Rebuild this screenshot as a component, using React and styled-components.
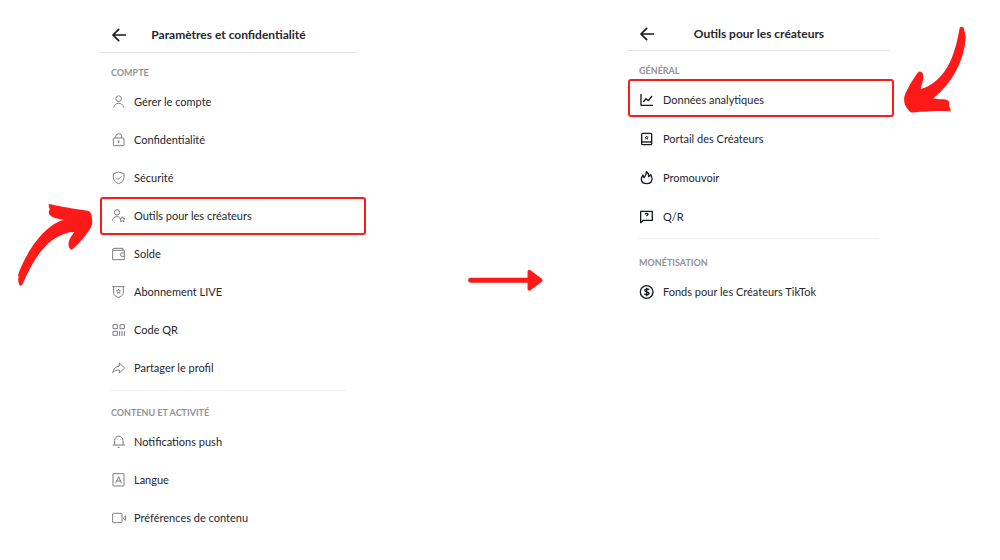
import React from 'react';
import styled, { createGlobalStyle } from 'styled-components';

const RED = '#ff1a1a';

const STAR = 'M0-8l2.4 5.2 5.6.6-4.2 3.8 1.2 5.6L0 4.4l-5 2.8 1.2-5.6L-8-2.2l5.6-.6z';

const icons = {
  person: (
    <>
      <circle cx="23" cy="11" r="8.5" />
      <path d="M8 37C11 28 16 25 23 25s12 3 15 12" />
    </>
  ),
  lock: (
    <>
      <rect x="7" y="15" width="32" height="23" rx="3" />
      <path d="M14 15v-4a9 9 0 0 1 18 0v4M23 24v7M20 24h6" />
    </>
  ),
  shield: (
    <>
      <path d="M23 3l16 5v12c0 9-7 15-16 18C14 35 7 29 7 20V8z" />
      <path d="M15 20l6 6 10-10" />
    </>
  ),
  creator: (
    <>
      <circle cx="18" cy="10" r="8" />
      <path d="M4 35C5 27 11 23 18 23c3 0 6 1 8 2" />
      <path d={STAR} transform="translate(34 31)" />
    </>
  ),
  wallet: (
    <>
      <path d="M36 10V4H8a3 3 0 0 0-3 3v31h35V10H6" />
      <path d="M40 18h-7a5 5 0 0 0 0 10h7" />
    </>
  ),
  badge: (
    <>
      <path d="M3 5h38M8 5v20c0 6 7 9 14 13 7-4 15-7 15-13V5" />
      <path d={STAR} transform="translate(22.500 19) scale(.8)" />
    </>
  ),
  qr: (
    <>
      <rect x="6" y="5" width="13" height="12" />
      <rect x="27" y="5" width="13" height="12" />
      <rect x="6" y="25" width="13" height="12" />
      <path d="M26 24v15M33 24v15M40 24v15" />
    </>
  ),
  share: <path d="M25 6l16 15-16 15v-9c-9 0-15 2-20 8 2-11 9-19 20-20z" />,
  bell: (
    <>
      <path d="M11 30V16a12 12 0 0 1 25 0v14M5 30h37" />
      <path d="M20 37h6" />
    </>
  ),
  language: (
    <>
      <rect x="6" y="2" width="33" height="37" rx="1" />
      <path d="M14 30l9-19 8 19M17 24h12" />
    </>
  ),
  camera: (
    <>
      <rect x="5" y="7" width="28" height="28" rx="2" />
      <path d="M44 15v13l-6-5v-3z" />
    </>
  ),
  chart: <path d="M6 3v34h36M13 27l8-10 7 6L39 9" />,
  book: (
    <>
      <rect x="8" y="4" width="30" height="34" rx="3" />
      <path d="M8 30h30" />
      <path d={STAR} transform="translate(23 17) scale(.6)" />
    </>
  ),
  flame: (
    <path d="M22 2c6 4 8 9 7 15l6-6c3 6 5 10 4 14-1 8-8 13-16 13S8 33 7 26c-1-5 2-9 5-14l3 8c5-5 7-11 7-18z" />
  ),
  question: (
    <>
      <path d="M5 38V4h35v27H13z" />
      <path d="M18 13c1-4 9-4 9 0 0 3-4 3-4 6M23 24v1" />
    </>
  ),
  dollar: (
    <>
      <circle cx="23" cy="21" r="19" />
      <path d="M30 15c-2-4-13-4-13 1 0 6 13 3 13 9 0 6-12 5-14 1M23 8v26" />
    </>
  ),
};

const account = [
  { icon: 'person', text: 'Gérer le compte' },
  { icon: 'lock', text: 'Confidentialité' },
  { icon: 'shield', text: 'Sécurité' },
  { icon: 'creator', text: 'Outils pour les créateurs', selected: true },
  { icon: 'wallet', text: 'Solde' },
  { icon: 'badge', text: 'Abonnement LIVE' },
  { icon: 'qr', text: 'Code QR' },
  { icon: 'share', text: 'Partager le profil' },
];

const content = [
  { icon: 'bell', text: 'Notifications push' },
  { icon: 'language', text: 'Langue' },
  { icon: 'camera', text: 'Préférences de contenu' },
];

const general = [
  { icon: 'chart', text: 'Données analytiques', selected: true },
  { icon: 'book', text: 'Portail des Créateurs' },
  { icon: 'flame', text: 'Promouvoir' },
  { icon: 'question', text: 'Q/R' },
];

const money = [
  { icon: 'dollar', text: 'Fonds pour les Créateurs TikTok' },
];

function PanelHeader({ title, tools }) {
  return (
    <Header $tools={tools}>
      <BackButton type="button" aria-label="Retour">
        <BackIcon viewBox="0 0 42 42">
          <path d="M40 21H4M20 4L3 21l17 17" />
        </BackIcon>
      </BackButton>
      <Title>{title}</Title>
    </Header>
  );
}

function Menu({ label, items, tools }) {
  return (
    <Section>
      <Label>{label}</Label>
      <List $tools={tools}>
        {items.map(item => (
          <li key={item.icon}>
            <Row type="button" $selected={item.selected} $tools={tools}>
              <Icon viewBox="0 0 42 42" $dark={tools} aria-hidden="true">
                {icons[item.icon]}
              </Icon>
              {item.text}
            </Row>
          </li>
        ))}
      </List>
    </Section>
  );
}

export default function App() {
  return (
    <>
      <GlobalStyle />
      <Page>
        <LeftArrow viewBox="26 38 224 250" aria-hidden="true">
          <path d="M118 41C150 47 195 57 234 61Q244 62 246 76Q250 100 245 108C235 128 210 158 190 175Q184 181 179 172C174 160 177 145 194 125C165 124 130 145 110 165C80 195 60 235 40 280Q36 288 30 283Q25 270 27 262Q29 258 26 254C45 195 100 105 163 88C145 86 125 82 119 71Q116 66 121 57Q117 50 118 41z" />
        </LeftArrow>
        <Panel>
          <PanelHeader title="Paramètres et confidentialité" />
          <Menu label="COMPTE" items={account} />
          <Divider />
          <Menu label="CONTENU ET ACTIVITÉ" items={content} />
        </Panel>
        <MiddleArrow viewBox="24 28 226 68" aria-hidden="true">
          <path d="M32 62h175" strokeWidth="15" />
          <path d="M209 36v52l34-26z" strokeWidth="11" />
        </MiddleArrow>
        <Panel>
          <PanelHeader title="Outils pour les créateurs" tools />
          <Menu label="GÉNÉRAL" items={general} tools />
          <Divider $tools />
          <Menu label="MONÉTISATION" items={money} tools />
        </Panel>
        <RightArrow viewBox="42 34 187 264" aria-hidden="true">
          <path d="M210 39Q215 33 222 39Q226 55 228 66C225 130 195 200 130 253C145 256 160 254 173 257Q181 262 178 271Q176 275 181 281L183 291C145 290 105 292 70 295Q60 296 54 285C43 274 41 262 43 247C52 220 70 195 83 175Q91 167 99 177C103 190 97 205 92 224C120 218 148 195 165 170C190 135 202 85 210 39z" />
        </RightArrow>
      </Page>
    </>
  );
}

const GlobalStyle = createGlobalStyle`
  * {
    box-sizing: border-box;
  }
  body {
    margin: 0;
    background: #fff;
    color: #26262e;
    font-family: Lato, "Liberation Sans", sans-serif;
  }
  button {
    font-family: inherit;
    color: inherit;
    background: none;
    border: 0;
    padding: 0;
    cursor: pointer;
  }
`;

const Page = styled.main`
  display: grid;
  grid-template-columns: 100fr 266fr 262fr 266fr 106fr;
  align-items: start;
  padding-bottom: 23px;
`;

const Panel = styled.section`
  min-width: 0;
`;

const Header = styled.header`
  display: grid;
  grid-template-columns: 16px 1fr 16px;
  align-items: center;
  height: ${props => (props.$tools ? '51px' : '53px')};
  padding: 18px 11px 0;
  margin-right: ${props => (props.$tools ? '4px' : '9px')};
  border-bottom: 1px solid #e3e3e4;
`;

const BackButton = styled.button`
  display: flex;
  justify-content: center;
`;

const BackIcon = styled.svg`
  width: 14px;
  height: 14px;
  fill: none;
  stroke: #161823;
  stroke-width: 5;
  stroke-linecap: round;
  stroke-linejoin: round;
`;

const Title = styled.h1`
  margin: 0;
  font-size: 12px;
  line-height: 16px;
  font-weight: 700;
  text-align: center;
  white-space: nowrap;
`;

const Section = styled.section`
  padding-top: 12px;
`;

const Label = styled.h2`
  margin: 0 11px;
  font-size: 9px;
  line-height: 16px;
  font-weight: 700;
  color: #929297;
`;

const List = styled.ul`
  display: grid;
  gap: ${props => (props.$tools ? '1px' : '0')};
  margin: 0;
  padding: ${props => (props.$tools ? '0' : '2px 0 0')};
  list-style: none;
`;

const Row = styled.button`
  display: flex;
  align-items: center;
  gap: ${props => (props.$tools ? '10px' : '9px')};
  width: 100%;
  height: 38px;
  padding: ${props => (props.$tools ? '4px 9px 0' : '0 9px')};
  border: 2px solid ${props => (props.$selected ? RED : 'transparent')};
  border-radius: 3px;
  font-size: 11px;
  line-height: 16px;
  text-align: left;
`;

const Icon = styled.svg`
  flex: none;
  width: 14px;
  height: 14px;
  overflow: visible;
  fill: none;
  stroke: ${props => (props.$dark ? '#161823' : '#7d7d84')};
  stroke-width: ${props => (props.$dark ? 4 : 3)};
  stroke-linejoin: round;
`;

const Divider = styled.hr`
  height: 1px;
  margin: ${props => (props.$tools ? '4px 15px 4px 11px' : '3px 20px 2px 11px')};
  border: 0;
  background: #eeeeef;
`;

const LeftArrow = styled.svg`
  justify-self: end;
  width: 75px;
  margin: 203px 7px 0 0;
  fill: ${RED};
`;

const MiddleArrow = styled.svg`
  justify-self: center;
  width: 75px;
  margin: 269px 0 0 17px;
  fill: ${RED};
  stroke: ${RED};
  stroke-linecap: round;
  stroke-linejoin: round;
`;

const RightArrow = styled.svg`
  width: 62px;
  margin: 26px 0 0 10px;
  fill: ${RED};
`;
